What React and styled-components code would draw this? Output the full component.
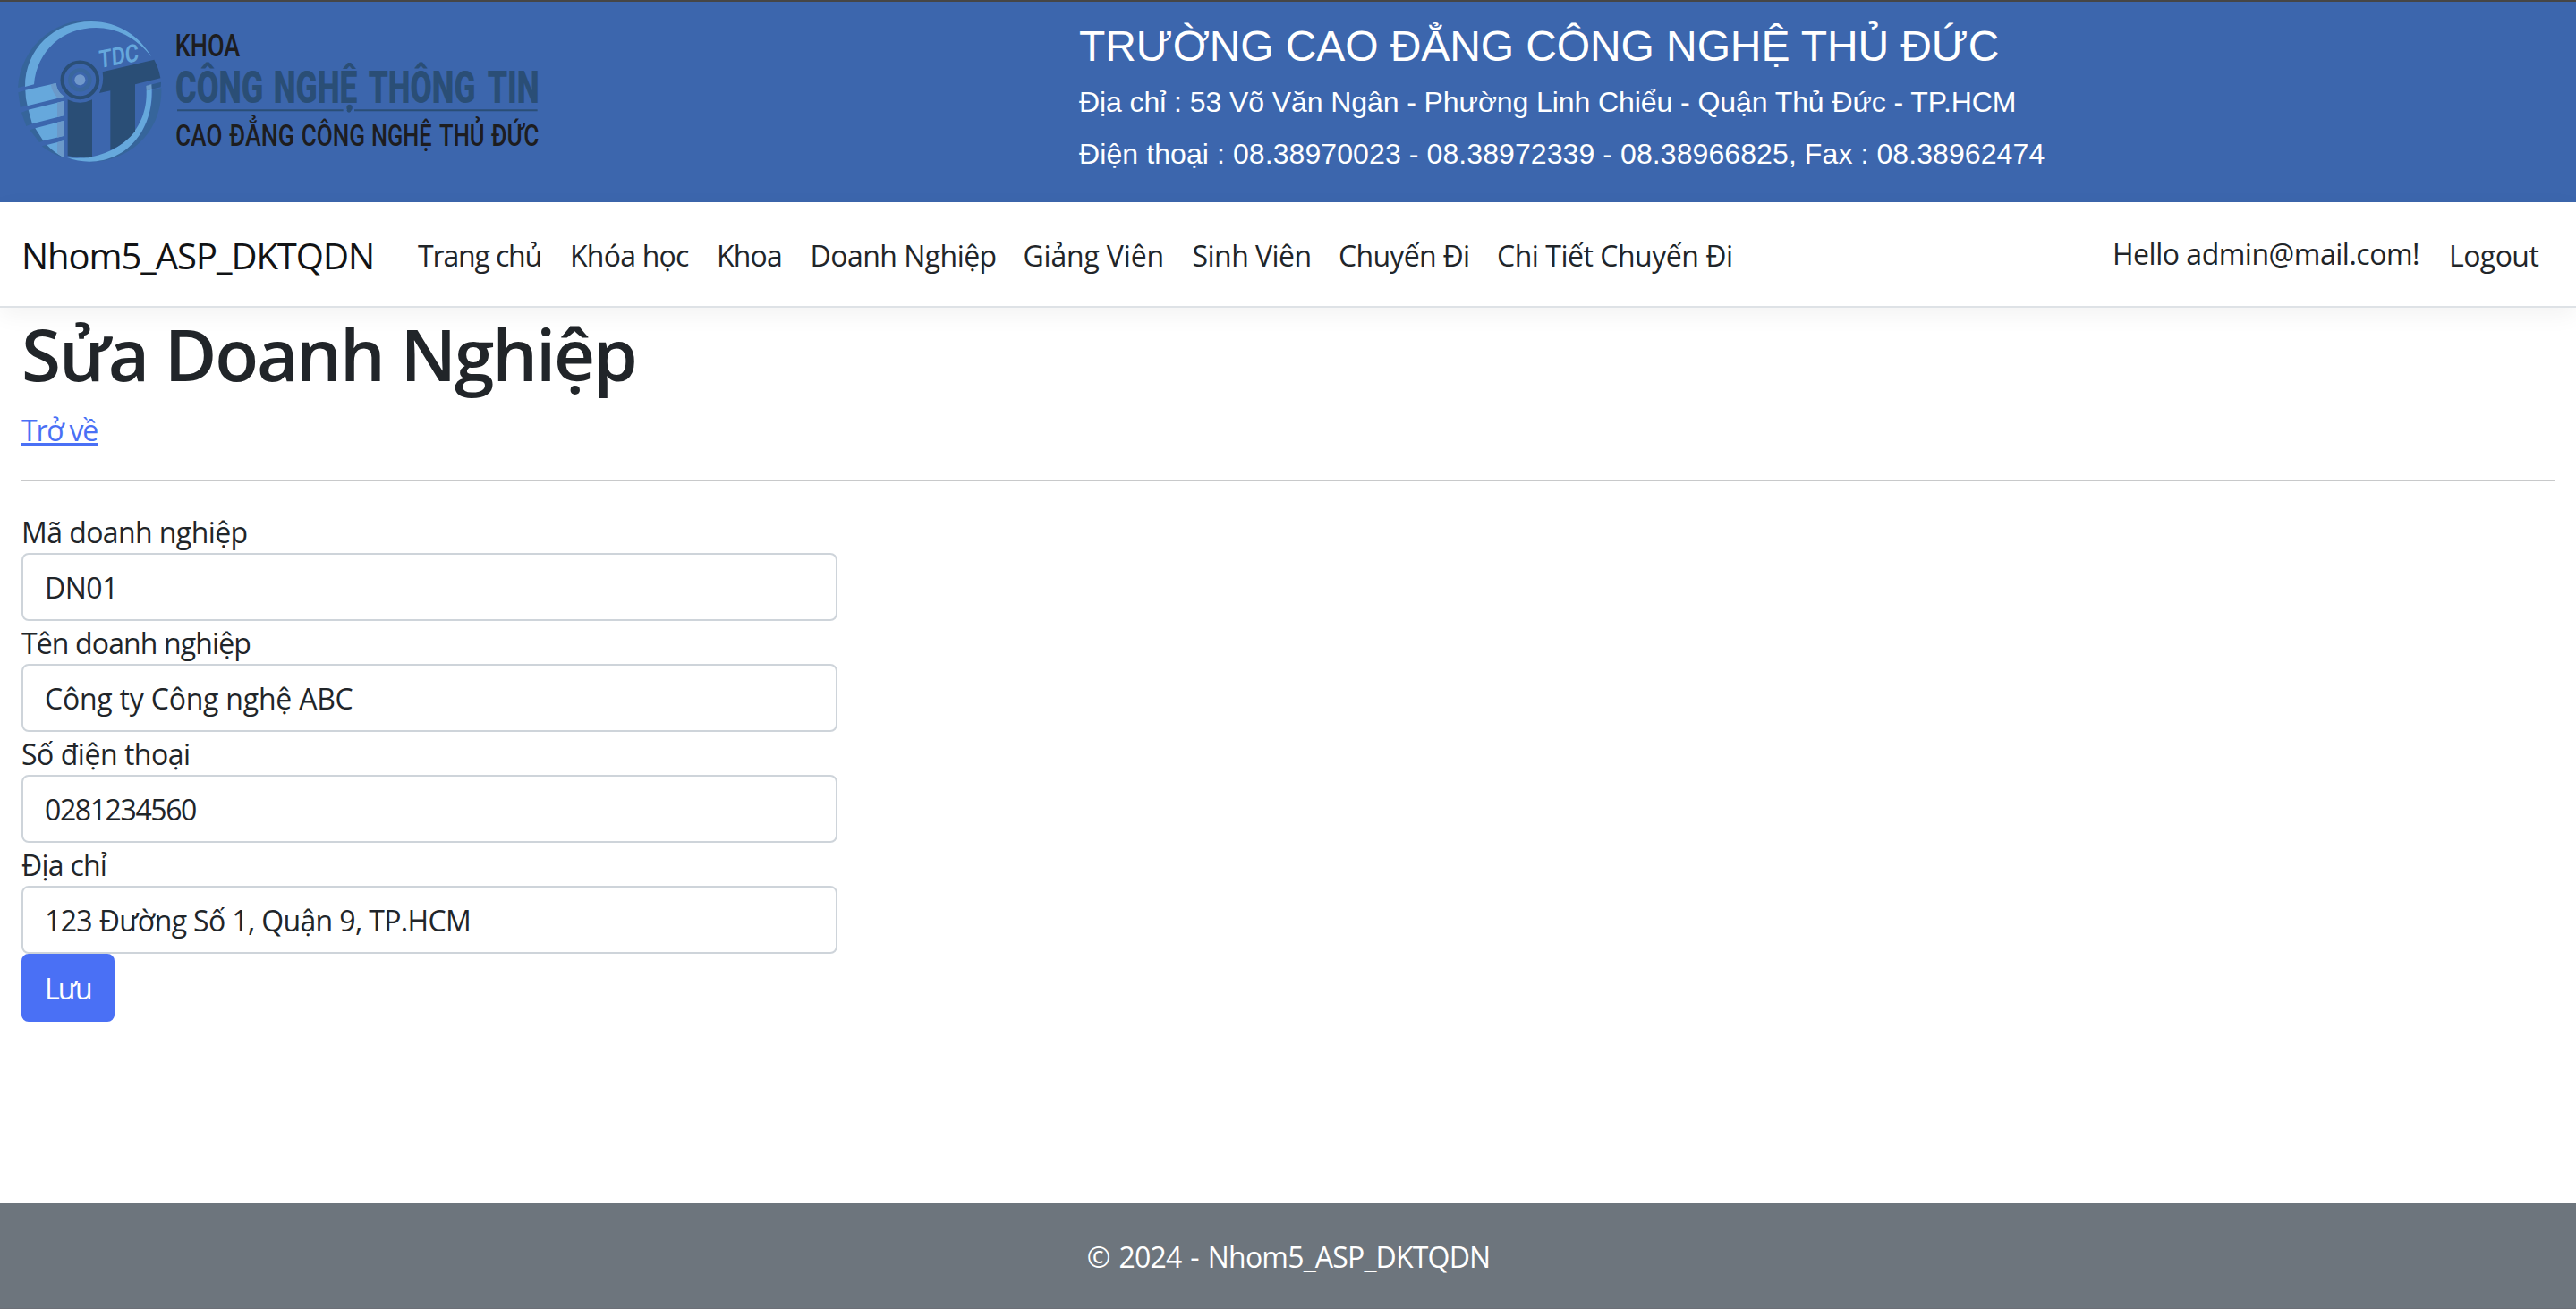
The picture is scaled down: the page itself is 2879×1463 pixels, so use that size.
import React from "react";
import styled, { createGlobalStyle } from "styled-components";

const GlobalStyle = createGlobalStyle`
  *, *::before, *::after { box-sizing: border-box; }
  body {
    margin: 0;
    background: #fff;
    color: #212529;
    font-family: "Open Sans", "Noto Sans", sans-serif;
    font-size: 32px;
    line-height: 48px;
    overflow: hidden;
  }
`;

const Page = styled.div`
  display: flex;
  flex-direction: column;
  height: 1463px;
`;

const Banner = styled.header`
  display: flex;
  flex: none;
  height: 226px;
  border-top: 2px solid #464646;
  background: #3c66ad;
  color: #fff;
  font-family: "Liberation Sans", Arial, sans-serif;
`;

const LogoArea = styled.div`
  flex: 0 0 1206px;
`;

const LogoDrawing = styled.svg`
  display: block;
  overflow: visible;
  font-family: Roboto, sans-serif;
`;

const School = styled.div`
  display: flex;
  flex-direction: column;
  padding-top: 21px;
  white-space: nowrap;
`;

const SchoolName = styled.div`
  margin-bottom: 9px;
  font-size: 48px;
  line-height: 58px;
  letter-spacing: -0.1px;
`;

const SchoolLine = styled.div`
  height: 58px;
  letter-spacing: ${(p) => p.$ls}px;
`;

const Navbar = styled.nav`
  position: relative;
  display: flex;
  flex: none;
  align-items: center;
  height: 118px;
  padding: 4px 41px 0 24px;
  border-bottom: 2px solid #dee2e6;
  background: #fff;
  box-shadow: 0 8px 24px rgba(0, 0, 0, 0.05);
  white-space: nowrap;
`;

const Brand = styled.a`
  width: 443px;
  font-size: 40px;
  line-height: 60px;
  letter-spacing: -1.05px;
  color: #111315;
`;

const Menu = styled.div`
  display: flex;
  flex: 1;
  gap: 32px;
`;

const MenuLink = styled.a`
  width: ${(p) => p.$w}px;
  letter-spacing: ${(p) => p.$ls}px;
`;

const Account = styled.div`
  display: flex;
  align-items: flex-start;
`;

const Greeting = styled.span`
  width: 376px;
  margin-top: -2px;
  padding-bottom: 2px;
  letter-spacing: -0.49px;
`;

const Logout = styled.a`
  width: 101px;
  letter-spacing: -0.56px;
`;

const Main = styled.main`
  flex: 1;
  padding: 0 24px;
`;

const Title = styled.h1`
  margin: 0 0 16px;
  padding-top: 3px;
  height: 96px;
  font-size: 80px;
  font-weight: 600;
  line-height: 96px;
  letter-spacing: -2.1px;
`;

const BackLink = styled.a`
  display: block;
  width: max-content;
  height: 48px;
  padding-top: 1px;
  color: #4a70f5;
  letter-spacing: -1.25px;
  text-decoration: underline;
`;

const Divider = styled.hr`
  height: 2px;
  margin: 32px 0;
  border: 0;
  background: #c8c9ca;
`;

const Form = styled.form`
  display: flex;
  flex-direction: column;
  align-items: flex-start;
  width: 912px;
`;

const Label = styled.label`
  height: 48px;
  padding-top: 1px;
  letter-spacing: ${(p) => p.$ls}px;
`;

const Input = styled.input`
  width: 100%;
  height: 76px;
  padding: 12px 24px;
  border: 2px solid #ced4da;
  border-radius: 8px;
  background: #fff;
  color: #212529;
  font: inherit;
  letter-spacing: ${(p) => p.$ls}px;
`;

const Save = styled.button`
  width: 104px;
  height: 76px;
  padding: 13px 0 11px 24px;
  border: 2px solid #4a70f5;
  border-radius: 8px;
  background: #4a70f5;
  color: #fff;
  font: inherit;
  letter-spacing: -2px;
  text-align: left;
`;

const Footer = styled.footer`
  flex: none;
  height: 119px;
  padding: 1px 0 0 1px;
  border-bottom: 1px solid #6b6f77;
  background: #6d757d;
  color: #fff;
  line-height: 120px;
  letter-spacing: -0.82px;
  word-spacing: 2.5px;
  text-align: center;
`;

const links = [
  ["Trang chủ", 138, -1.15],
  ["Khóa học", 132, -0.77],
  ["Khoa", 72.5, -0.83],
  ["Doanh Nghiệp", 206, -0.53],
  ["Giảng Viên", 157, -0.18],
  ["Sinh Viên", 131.5, -0.54],
  ["Chuyến Đi", 145, -0.7],
  ["Chi Tiết Chuyến Đi", 265, -0.48],
];

const fields = [
  ["ma", "Mã doanh nghiệp", -0.58, "DN01", -0.5],
  ["ten", "Tên doanh nghiệp", -0.87, "Công ty Công nghệ ABC", -0.22],
  ["sdt", "Số điện thoại", -0.48, "0281234560", -1.4],
  ["diachi", "Địa chỉ", -0.75, "123 Đường Số 1, Quận 9, TP.HCM", -0.64],
];

const navy = "#2a4e76";
const sky = "#66a8dc";
const mist = "#6b99c9";
const shade = "#36659b";

/* word, left edge, drawn width */
const facultyWords = [
  ["CÔNG", 588, 295],
  ["NGHỆ", 917, 281],
  ["THÔNG", 1235, 359],
  ["TIN", 1634, 174],
];
const collegeWords = [
  ["CAO", 589, 156],
  ["ĐẲNG", 769, 218],
  ["CÔNG", 1010, 214],
  ["NGHỆ", 1245, 203],
  ["THỦ", 1473, 152],
  ["ĐỨC", 1647, 160],
];

function Words({ list, ...rest }) {
  return list.map(([word, x, w]) => (
    <text key={word} x={x} textLength={w} lengthAdjust="spacingAndGlyphs" {...rest}>
      {word}
    </text>
  ));
}

function Logo() {
  return (
    <LogoDrawing width="640" height="224" viewBox="0 6 1920 672">
      <path fill={shade} d="M60 294A240 240 0 0 1 340 70L306 72C180 76 84 180 84 288Z" />
      <path fill={sky} d="M84 291C84 165 180 72 306 72C400 72 470 125 508 190C455 125 390 93 322 93C210 93 124 170 114 283Z" />
      <path fill={shade} d="M541 295C545 430 450 540 300 544C430 530 510 440 512 302Z" />
      <path fill={sky} d="M490 288L508 283C520 430 430 542 300 542Q260 542 225 528C370 545 505 450 490 288Z" />
      <path fill="#2f5a8c" d="M490 288L540 275L539 292L490 304Z" />
      <path fill={mist} d="M490 288L508 283L509 300L491 304Z" />

      <path fill={shade} d="M61 310L85 303L93 355L68 359ZM72 377L95 368L108 415L88 423ZM100 436L118 430L146 472L132 477ZM140 490L157 486L213 528Q170 515 140 490Z" />
      <path fill={sky} d="M85 302L188 279Q190 305 213 325L92 355Q85 330 85 302ZM95 368L213 339V388L108 415ZM118 430L213 405V456L145 472ZM157 486L213 472V528Q180 510 157 486Z" />
      <path fill={mist} d="M170 283L188 279Q190 305 213 322V325L194 330Q175 310 170 283ZM192 344L213 339V388L192 393ZM192 410L213 405V456L192 461ZM192 477L213 472V528L192 514Z" />

      <circle cx="268" cy="268" r="59.5" fill="none" stroke={navy} strokeWidth="12" />
      <circle cx="268" cy="268" r="33" fill="none" stroke="#3a679d" strokeWidth="13" />
      <circle cx="268" cy="268" r="18" fill="#7199cb" />
      <path fill={navy} d="M227 334Q268 355 309 334V527Q268 532 227 522Z" />
      <path fill={navy} d="M344 241L517 200Q533 230 538 262L453 283V440Q420 482 370 503V304L333 312Q350 280 344 241Z" />
      <text
        transform="translate(333 229) rotate(-11) skewX(-8)"
        fill={sky}
        fontSize="81"
        fontWeight="600"
        textLength="136"
        lengthAdjust="spacingAndGlyphs"
      >
        TDC
      </text>

      <text x="587" y="190" fontSize="105" fontWeight="500" fill="#1d1d20" textLength="218" lengthAdjust="spacingAndGlyphs">
        KHOA
      </text>
      <Words list={facultyWords} y="344" fontSize="151" fontWeight="900" fill={navy} />
      <path stroke={navy} strokeWidth="6" d="M594 370H1151M1188 370H1802" />
      <circle cx="1170" cy="370" r="7" fill={navy} />
      <Words list={collegeWords} y="490" fontSize="101" fontWeight="500" fill="#1d1d20" />
    </LogoDrawing>
  );
}

export default function App() {
  return (
    <Page>
      <GlobalStyle />
      <Banner>
        <LogoArea>
          <Logo />
        </LogoArea>
        <School>
          <SchoolName>TRƯỜNG CAO ĐẲNG CÔNG NGHỆ THỦ ĐỨC</SchoolName>
          <SchoolLine $ls={-0.08}>
            Địa chỉ : 53 Võ Văn Ngân - Phường Linh Chiểu - Quận Thủ Đức - TP.HCM
          </SchoolLine>
          <SchoolLine $ls={0.09}>
            Điện thoại : 08.38970023 - 08.38972339 - 08.38966825, Fax : 08.38962474
          </SchoolLine>
        </School>
      </Banner>
      <Navbar>
        <Brand>Nhom5_ASP_DKTQDN</Brand>
        <Menu>
          {links.map(([text, w, ls]) => (
            <MenuLink key={text} $w={w} $ls={ls}>
              {text}
            </MenuLink>
          ))}
        </Menu>
        <Account>
          <Greeting>Hello admin@mail.com!</Greeting>
          <Logout>Logout</Logout>
        </Account>
      </Navbar>
      <Main>
        <Title>Sửa Doanh Nghiệp</Title>
        <BackLink>Trở về</BackLink>
        <Divider />
        <Form>
          {fields.map(([id, label, labelLs, value, valueLs]) => (
            <React.Fragment key={id}>
              <Label htmlFor={id} $ls={labelLs}>
                {label}
              </Label>
              <Input id={id} defaultValue={value} $ls={valueLs} />
            </React.Fragment>
          ))}
          <Save type="button">Lưu</Save>
        </Form>
      </Main>
      <Footer>© 2024 - Nhom5_ASP_DKTQDN</Footer>
    </Page>
  );
}
